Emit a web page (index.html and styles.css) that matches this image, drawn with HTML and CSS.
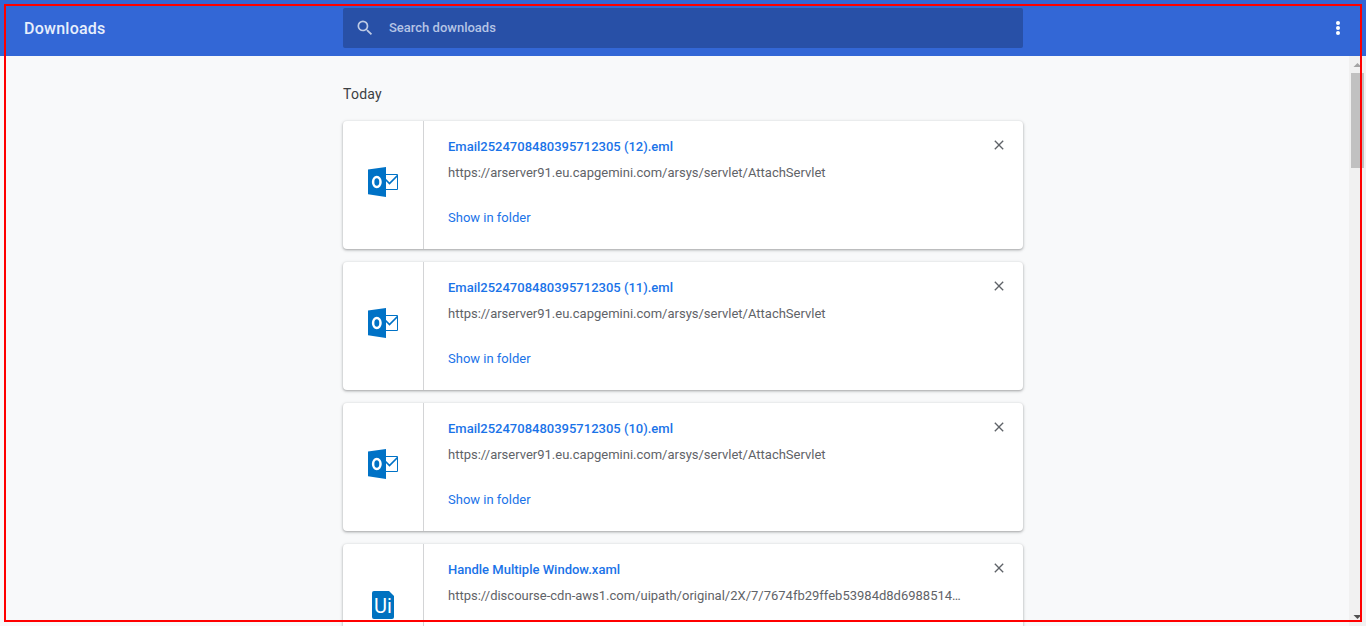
FILE: index.html
```html
<!DOCTYPE html>
<html lang="en">
<head>
<meta charset="utf-8">
<title>Downloads</title>
<link rel="stylesheet" href="styles.css">
</head>
<body>
<svg class="defs" width="0" height="0">
  <symbol id="close" viewBox="0 0 24 24"><path d="M19 6.41L17.59 5 12 10.59 6.41 5 5 6.41 10.59 12 5 17.59 6.41 19 12 13.41 17.59 19 19 17.59 13.41 12z"/></symbol>
  <symbol id="outlook" viewBox="0 0 32 32">
    <path d="M18 8.5h12.500v15H18" fill="#fff" stroke="#0072c6"/>
    <path d="M18.500 13.500l4 4L30.500 9.500" fill="none" stroke="#0072c6" stroke-width="1.700"/>
    <path d="M1 3.500L19 1v30L1 28.300z" fill="#0072c6"/>
    <ellipse cx="9.800" cy="16" rx="3.700" ry="5" fill="none" stroke="#fff" stroke-width="2.500"/>
  </symbol>
</svg>
<header class="toolbar">
  <h1 class="title">Downloads</h1>
  <div class="search">
    <svg class="search-icon" viewBox="0 0 24 24"><path d="M15.500 14h-.79l-.28-.27A6.471 6.471 0 0 0 16 9.500 6.500 6.500 0 1 0 9.500 16c1.610 0 3.090-.59 4.230-1.570l.27.28v.79l5 4.990L20.490 19l-4.990-5zm-6 0C7.010 14 5 11.990 5 9.500S7.010 5 9.500 5 14 7.010 14 9.500 11.990 14 9.500 14z"/></svg>
    <span class="search-text">Search downloads</span>
  </div>
  <svg class="menu" viewBox="0 0 20 20"><circle cx="10" cy="5" r="2"/><circle cx="10" cy="10" r="2"/><circle cx="10" cy="15" r="2"/></svg>
</header>
<div class="body">
  <main class="content">
    <h2 class="day">Today</h2>
    <article class="card">
      <div class="file-icon"><svg class="outlook"><use href="#outlook"/></svg></div>
      <div class="details">
        <div class="name">Email2524708480395712305 (12).eml</div>
        <div class="url">https://arserver91.eu.capgemini.com/arsys/servlet/AttachServlet</div>
        <div class="action">Show in folder</div>
      </div>
      <svg class="close"><use href="#close"/></svg>
    </article>
    <article class="card">
      <div class="file-icon"><svg class="outlook"><use href="#outlook"/></svg></div>
      <div class="details">
        <div class="name">Email2524708480395712305 (11).eml</div>
        <div class="url">https://arserver91.eu.capgemini.com/arsys/servlet/AttachServlet</div>
        <div class="action">Show in folder</div>
      </div>
      <svg class="close"><use href="#close"/></svg>
    </article>
    <article class="card">
      <div class="file-icon"><svg class="outlook"><use href="#outlook"/></svg></div>
      <div class="details">
        <div class="name">Email2524708480395712305 (10).eml</div>
        <div class="url">https://arserver91.eu.capgemini.com/arsys/servlet/AttachServlet</div>
        <div class="action">Show in folder</div>
      </div>
      <svg class="close"><use href="#close"/></svg>
    </article>
    <article class="card card-last">
      <div class="file-icon">
        <div class="uipath">Ui</div>
      </div>
      <div class="details">
        <div class="name">Handle Multiple Window.xaml</div>
        <div class="url">https://discourse-cdn-aws1.com/uipath/original/2X/7/7674fb29ffeb53984d8d6988514…</div>
      </div>
      <svg class="close"><use href="#close"/></svg>
    </article>
  </main>
  <div class="scrollbar">
    <svg class="arrow up" viewBox="0 0 17 17"><path d="M4.500 11L8.500 7l4 4z"/></svg>
    <div class="thumb"></div>
    <svg class="arrow down" viewBox="0 0 17 17"><path d="M4.500 6h8l-4 4z"/></svg>
  </div>
</div>
<div class="frame"></div>
</body>
</html>
```

FILE: styles.css
```css
* { box-sizing: border-box; }
body {
  margin: 0;
  height: 626px;
  display: flex;
  flex-direction: column;
  overflow: hidden;
  background: #f8f9fa;
  font-family: Roboto, sans-serif;
  font-size: 13px;
}
.defs { position: absolute; }
.toolbar {
  flex: none;
  height: 56px;
  display: grid;
  grid-template-columns: 1fr 680px 1fr;
  background: #3367d6;
  color: #fff;
}
.title {
  margin: 0;
  padding: 1px 0 0 24px;
  line-height: 56px;
  font-size: 16px;
  font-weight: 500;
  letter-spacing: .25px;
  color: #e8effc;
}
.search {
  height: 40px;
  margin-top: 8px;
  display: flex;
  align-items: center;
  border-radius: 2px;
  background: #2850a7;
  color: #b5c4e5;
  font-weight: 500;
}
.search-text { padding-bottom: 2px; }
.search-icon { width: 20px; height: 20px; margin: 0 14px 0 12px; fill: #bfcbe5; }
.menu { width: 20px; height: 20px; margin: 18px 18px 0 0; justify-self: end; fill: #fff; }
.body {
  flex: 1;
  min-height: 0;
  display: flex;
  justify-content: space-between;
}
.content {
  width: 680px;
  margin-left: 343px;
  padding-top: 28px;
  display: flex;
  flex-direction: column;
  gap: 13px;
}
.day {
  margin: 0 0 4px;
  line-height: 20px;
  font-size: 14px;
  font-weight: 400;
  letter-spacing: .25px;
  color: #3c4043;
}
.card {
  flex: none;
  height: 128px;
  display: flex;
  background: #fff;
  border-radius: 4px;
  box-shadow: 0 1px 2px rgba(60,64,67,.3), 0 1px 3px 1px rgba(60,64,67,.15);
}
/* The last visible card continues to the bottom of the window. */
.card-last { height: 82px; border-radius: 4px 4px 0 0; }
.file-icon {
  width: 81px;
  height: 128px;
  display: flex;
  align-items: center;
  justify-content: center;
  border-right: 1px solid #d3d4d6;
}
.card-last .file-icon { height: 82px; align-items: flex-start; padding-top: 47px; }
.outlook { width: 32px; height: 32px; margin-top: -6px; }
.uipath {
  width: 22px;
  height: 28px;
  border-radius: 2px;
  background: #0072c0;
  clip-path: polygon(0 0, 17px 0, 22px 5px, 22px 28px, 0 28px);
  color: #fff;
  font: 400 20px/30px Roboto, sans-serif;
  text-align: center;
}
.details { flex: 1; padding: 16px 0 0 24px; white-space: nowrap; }
.name { line-height: 20px; font-weight: 500; color: #1a73e8; }
.url { margin-top: 6px; line-height: 20px; color: #5f6368; }
.action { margin-top: 25px; line-height: 20px; color: #1a73e8; }
.close { width: 16px; height: 16px; margin: 16px 16px 0 0; fill: #5f6368; }
.scrollbar {
  width: 17px;
  display: flex;
  flex-direction: column;
  background: #f1f1f1;
}
.arrow { width: 17px; height: 17px; }
.up { fill: #a3a3a3; }
.down { margin-top: auto; fill: #505050; }
.thumb { width: 13px; height: 95px; margin-left: 2px; background: #c1c1c1; }
.frame {
  position: absolute;
  left: 4px;
  top: 4px;
  width: 1358px;
  height: 618px;
  border: 2px solid #f00;
}
```
